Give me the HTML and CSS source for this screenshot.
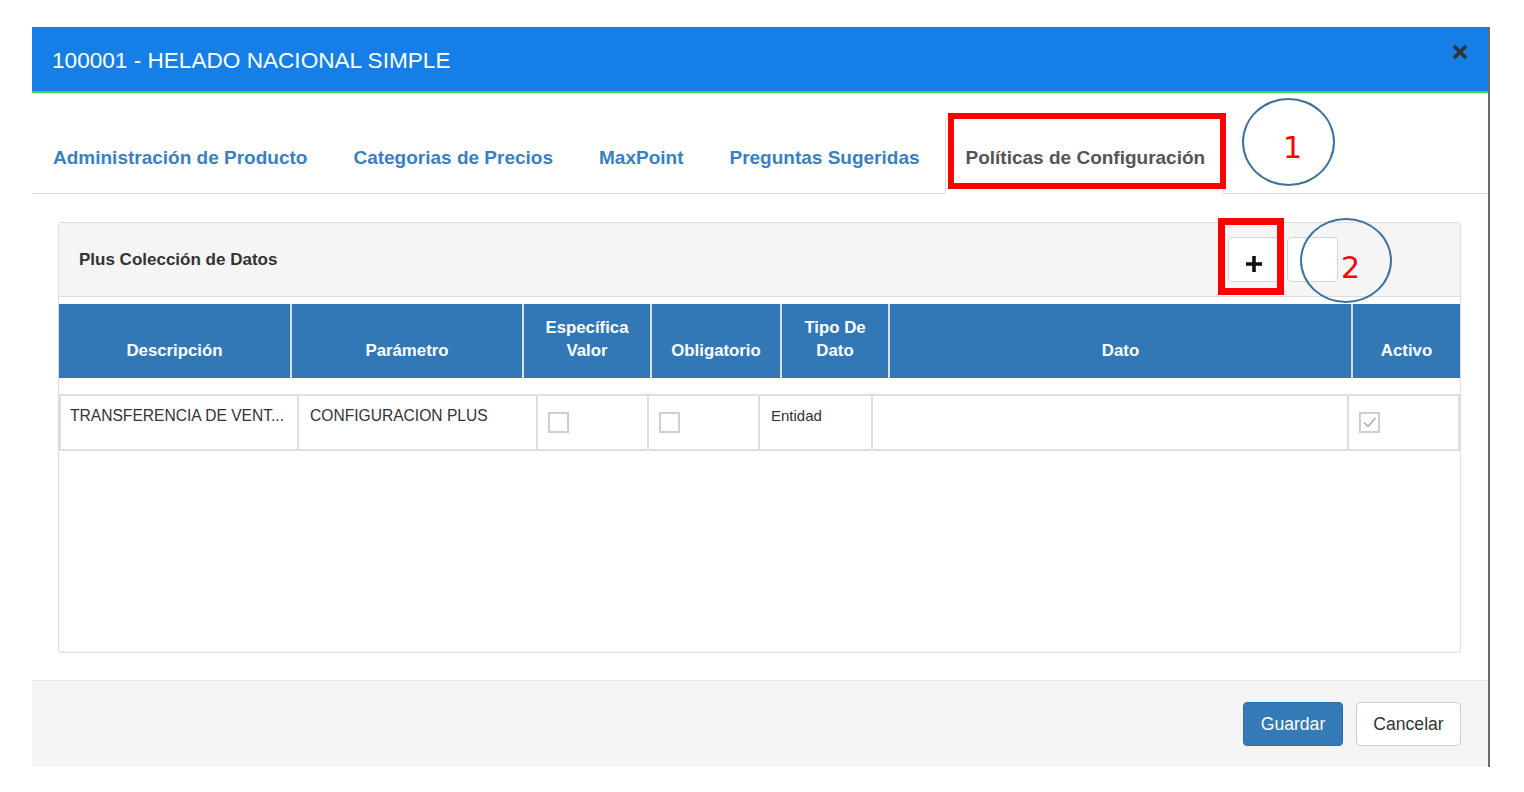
FILE: index.html
```html
<!DOCTYPE html>
<html lang="es">
<head>
<meta charset="utf-8">
<title>100001 - HELADO NACIONAL SIMPLE</title>
<link rel="stylesheet" href="styles.css">
</head>
<body>
<div class="page">
  <div class="modal">
    <div class="modal-header">
      <h4 class="modal-title">100001 - HELADO NACIONAL SIMPLE</h4>
      <button class="close" type="button" aria-label="Cerrar">
        <svg width="14" height="14" viewBox="0 0 14 14"><path d="M2 2 L12 12 M12 2 L2 12" stroke="#333" stroke-width="3.4" stroke-linecap="square" fill="none"/></svg>
      </button>
    </div>
    <div class="modal-body">
      <ul class="tabs">
        <li><a href="#">Administración de Producto</a></li>
        <li><a href="#">Categorias de Precios</a></li>
        <li><a href="#">MaxPoint</a></li>
        <li><a href="#">Preguntas Sugeridas</a></li>
        <li class="active"><a href="#">Políticas de Configuración</a></li>
      </ul>
      <div class="tab-content">
        <div class="panel">
          <div class="panel-heading">
            <span class="panel-title">Plus Colección de Datos</span>
            <div class="btns">
              <button class="btn-icon" type="button">
                <svg width="18" height="18" viewBox="0 0 18 18"><path d="M9 1 V17 M1 9 H17" stroke="#111" stroke-width="3.6" fill="none"/></svg>
              </button>
              <button class="btn-icon" type="button"></button>
            </div>
          </div>
          <div class="panel-body">
            <div class="thead">
              <div class="th">Descripción</div>
              <div class="th">Parámetro</div>
              <div class="th">Específica<br>Valor</div>
              <div class="th">Obligatorio</div>
              <div class="th">Tipo De<br>Dato</div>
              <div class="th">Dato</div>
              <div class="th">Activo</div>
            </div>
            <div class="tbody">
              <div class="td td-upper">TRANSFERENCIA DE VENT...</div>
              <div class="td td-upper td-param">CONFIGURACION PLUS</div>
              <div class="td chk"><span class="cb"></span></div>
              <div class="td chk"><span class="cb"></span></div>
              <div class="td td-type">Entidad</div>
              <div class="td"></div>
              <div class="td chk"><span class="cb checked"><svg width="17" height="17" viewBox="0 0 17 17"><path d="M3 8.5 L7 12.5 L14.5 4" stroke="#a8a8a8" stroke-width="1.5" fill="none"/></svg></span></div>
            </div>
          </div>
        </div>
      </div>
    </div>
    <div class="modal-footer">
      <button class="btn btn-primary" type="button">Guardar</button>
      <button class="btn btn-default" type="button">Cancelar</button>
    </div>
  </div>

  <div class="mark mark-rect1"></div>
  <div class="mark mark-circle1"></div>
  <span class="mark mark-num num1">1</span>
  <div class="mark mark-rect2"></div>
  <div class="mark mark-circle2"></div>
  <span class="mark mark-num num2">2</span>
</div>
</body>
</html>
```

FILE: styles.css
```css
html, body {
  margin: 0;
  padding: 0;
  background: #fff;
  font-family: "Liberation Sans", Arial, sans-serif;
}

.page {
  position: relative;
  width: 1524px;
  height: 792px;
  padding: 27px 0 0 32px;
  box-sizing: border-box;
}

.modal {
  width: 1456px;
  border-right: 2px solid #6a6a6a;
  background: #fff;
}

.modal-header {
  height: 66px;
  box-sizing: border-box;
  background: #167fe7;
  border-bottom: 2px solid #37d34a;
  display: flex;
  align-items: center;
  justify-content: space-between;
  padding: 0 21px 0 20px;
}

.modal-title {
  margin: 0;
  padding-top: 3px;
  font-size: 22.6px;
  font-weight: normal;
  color: #fff;
}

.close {
  border: 0;
  background: transparent;
  padding: 0;
  margin-top: -14px;
  width: 14px;
  height: 14px;
  display: flex;
}

.tabs {
  list-style: none;
  margin: 0;
  padding: 25px 0 0 0;
  display: flex;
  border-bottom: 1px solid #ddd;
}

.tabs li {
  margin-right: 4px;
  margin-bottom: -1px;
}

.tabs a {
  display: flex;
  align-items: center;
  height: 76px;
  box-sizing: border-box;
  padding: 3px 20px 0 20px;
  font-size: 19px;
  font-weight: bold;
  color: #3a7fc0;
  text-decoration: none;
  border: 1px solid transparent;
  border-radius: 4px 4px 0 0;
}

.tabs li.active a {
  background: #fff;
  border-color: #ddd;
  border-bottom-color: #fff;
  color: #555;
  padding-right: 18px;
}

.tab-content {
  padding: 28px 27px 27px 26px;
}

.panel {
  height: 431px;
  box-sizing: border-box;
  border: 1px solid #ddd;
  border-radius: 4px;
  overflow: hidden;
}

.panel-heading {
  height: 74px;
  box-sizing: border-box;
  background: #f5f5f5;
  border-bottom: 1px solid #ddd;
  display: flex;
  align-items: center;
  justify-content: space-between;
  padding: 0 122px 0 20px;
}

.panel-title {
  font-size: 17px;
  font-weight: bold;
  color: #333;
}

.btns {
  display: flex;
  gap: 8px;
}

.btn-icon {
  width: 51px;
  height: 45px;
  box-sizing: border-box;
  border: 1px solid #d4d4d4;
  border-radius: 4px;
  background: #fff;
  padding: 17px 0 0 0;
  display: flex;
  justify-content: center;
  align-items: flex-start;
}

.panel-body {
  padding-top: 7px;
}

.thead {
  display: grid;
  grid-template-columns: 231px 230px 126px 128px 106px 461px 107px;
  column-gap: 2px;
  background: #d6e2ee;
  height: 74px;
}

.th {
  background: #3378b6;
  color: #fff;
  font-weight: bold;
  font-size: 16.8px;
  line-height: 23px;
  display: flex;
  align-items: flex-end;
  justify-content: center;
  text-align: center;
  padding-bottom: 16px;
  box-sizing: border-box;
}

.tbody {
  margin-top: 16px;
  display: grid;
  grid-template-columns: 236px 237px 109px 109px 111px 474px 109px;
  column-gap: 2px;
  padding: 2px;
  background: #dedede;
  height: 57px;
  box-sizing: border-box;
}

.td {
  background: #fff;
  font-size: 15px;
  line-height: 20px;
  color: #333;
  padding: 10px 9px;
  white-space: nowrap;
  overflow: hidden;
}

.td-upper {
  font-size: 15.6px;
}

.td-param {
  padding-left: 11px;
}

.td-type {
  padding-left: 11px;
}

.td.chk {
  padding: 16px 10px 0 10px;
}

.cb {
  display: block;
  width: 21px;
  height: 21px;
  box-sizing: border-box;
  border: 2px solid #cfcfcf;
  background: #fff;
}

.cb.checked {
  display: flex;
  align-items: center;
  justify-content: center;
}

.modal-footer {
  height: 87px;
  box-sizing: border-box;
  border-top: 1px solid #e5e5e5;
  background: #f4f4f4;
  display: flex;
  justify-content: flex-end;
  align-items: flex-start;
  gap: 13px;
  padding: 21px 27px 0 0;
}

.btn {
  height: 44px;
  box-sizing: border-box;
  border-radius: 4px;
  font-family: "Liberation Sans", Arial, sans-serif;
  font-size: 17.6px;
  padding: 0;
}

.btn-primary {
  width: 100px;
  background: #337ab7;
  border: 1px solid #2e6da4;
  color: #fff;
}

.btn-default {
  width: 105px;
  background: #fff;
  border: 1px solid #ccc;
  color: #333;
}

/* annotation overlays */
.mark {
  position: absolute;
  box-sizing: border-box;
}

.mark-rect1 {
  left: 948px;
  top: 113px;
  width: 278px;
  height: 76px;
  border: 6px solid #ff0000;
}

.mark-rect2 {
  left: 1218px;
  top: 218px;
  width: 66px;
  height: 77px;
  border: 7px solid #ff0000;
}

.mark-circle1 {
  left: 1242px;
  top: 98px;
  width: 93px;
  height: 88px;
  border: 2.5px solid #41719c;
  border-radius: 50%;
}

.mark-circle2 {
  left: 1300px;
  top: 218px;
  width: 92px;
  height: 85px;
  border: 2.5px solid #41719c;
  border-radius: 50%;
}

.mark-num {
  font-family: "DejaVu Sans", sans-serif;
  font-size: 30px;
  line-height: 30px;
  color: #ff0000;
}

.num1 {
  left: 1283px;
  top: 133px;
}

.num2 {
  left: 1341px;
  top: 253px;
}
```
